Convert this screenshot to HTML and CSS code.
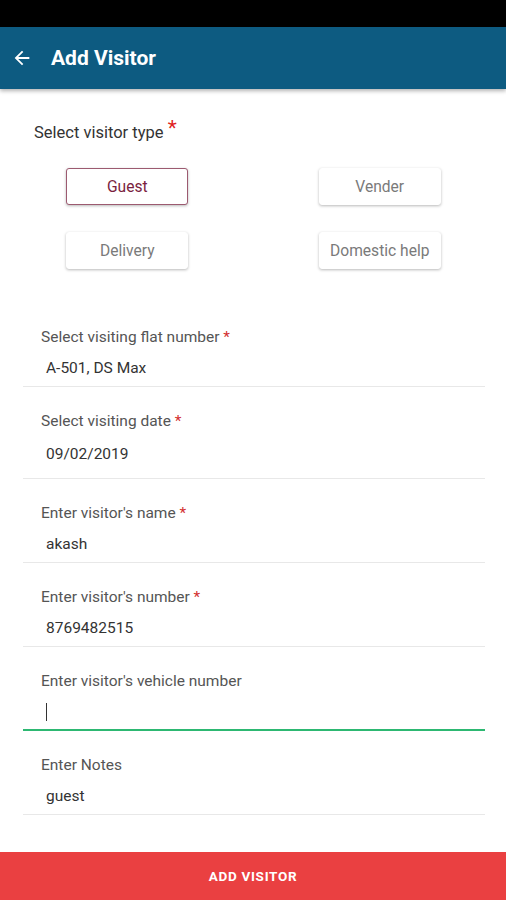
FILE: index.html
```html
<!DOCTYPE html>
<html>
<head>
<meta charset="utf-8">
<link rel="stylesheet" href="styles.css">
</head>
<body>
<div class="app">
  <div class="statusbar"></div>
  <header class="appbar">
    <svg class="back" width="22" height="22" viewBox="0 0 24 24"><path d="M20 11H7.83l5.59-5.59L12 4l-8 8 8 8 1.41-1.41L7.83 13H20v-2z" fill="#fff"/></svg>
    <h1 class="title">Add Visitor</h1>
  </header>
  <main class="content">
    <div class="type-label">Select visitor type <span class="req-big">*</span></div>
    <div class="type-grid">
      <div class="cell"><button class="chip chip-active">Guest</button></div>
      <div class="cell"><button class="chip">Vender</button></div>
      <div class="cell"><button class="chip">Delivery</button></div>
      <div class="cell"><button class="chip">Domestic help</button></div>
    </div>
    <div class="fields">
      <div class="field">
        <div class="label">Select visiting flat number <span class="req">*</span></div>
        <div class="value">A-501, DS Max</div>
      </div>
      <div class="field field-date">
        <div class="label">Select visiting date <span class="req">*</span></div>
        <div class="value">09/02/2019</div>
      </div>
      <div class="field">
        <div class="label">Enter visitor's name <span class="req">*</span></div>
        <div class="value">akash</div>
      </div>
      <div class="field">
        <div class="label">Enter visitor's number <span class="req">*</span></div>
        <div class="value">8769482515</div>
      </div>
      <div class="field field-focus">
        <div class="label">Enter visitor's vehicle number</div>
        <div class="value"><span class="cursor"></span></div>
      </div>
      <div class="field">
        <div class="label">Enter Notes</div>
        <div class="value">guest</div>
      </div>
    </div>
  </main>
  <footer class="submit">ADD VISITOR</footer>
</div>
</body>
</html>
```
FILE: styles.css
```css
* { box-sizing: border-box; }
html, body { margin: 0; padding: 0; }
body {
  font-family: Roboto, "Noto Sans", Arial, sans-serif;
  background: #fff;
}
.app {
  width: 506px;
  height: 900px;
  display: flex;
  flex-direction: column;
  overflow: hidden;
}
.statusbar {
  height: 27px;
  background: #000;
  flex: none;
}
.appbar {
  height: 62px;
  background: #0d5b81;
  display: flex;
  align-items: center;
  padding-left: 11px;
  box-shadow: 0 2px 4px rgba(0,0,0,0.3);
  position: relative;
  z-index: 1;
  flex: none;
}
.back { margin-right: 18px; }
.title {
  margin: 0;
  color: #fff;
  font-size: 21px;
  font-weight: 700;
}
.content {
  flex: 1;
  padding-top: 32px;
}
.type-label {
  font-size: 16.5px;
  color: #333;
  padding-left: 34px;
  line-height: 20px;
  height: 20px;
}
.req-big {
  color: #e0231f;
  font-size: 21px;
  position: relative;
  top: -3px;
}
.type-grid {
  display: grid;
  grid-template-columns: 1fr 1fr;
  row-gap: 27px;
  margin-top: 27px;
  padding-left: 1px;
}
.cell {
  display: flex;
  justify-content: center;
}
.chip {
  width: 122px;
  height: 37px;
  background: #fff;
  border: 1px solid #fff;
  border-radius: 3px;
  box-shadow: 0 1px 3px rgba(0,0,0,0.28);
  font-family: inherit;
  font-size: 15.6px;
  color: #7a7a7a;
  padding: 0;
}
.chip-active {
  border-color: #9c5a70;
  color: #7a1e40;
}
.fields {
  margin-top: 58px;
  padding: 0 21px 0 23px;
}
.field {
  padding-top: 24px;
  border-bottom: 1px solid #e8e8e8;
  padding-bottom: 8px;
}
.field:first-child { padding-top: 0; }
.label {
  font-size: 15.5px;
  color: #555;
  line-height: 20px;
  height: 20px;
  padding-left: 18px;
}
.req { color: #d32f2f; }
.value {
  margin-top: 11px;
  font-size: 15.5px;
  color: #333;
  line-height: 20px;
  height: 20px;
  padding-left: 23px;
  display: flex;
  align-items: center;
}
.field-date .value { margin-top: 13px; }
.field-date { padding-bottom: 14px; }
.field-focus {
  border-bottom: 2px solid #2db872;
  padding-bottom: 7px;
}
.cursor {
  display: inline-block;
  width: 1px;
  height: 18px;
  background: #333;
}
.submit {
  height: 48px;
  background: #ea4041;
  color: #fff;
  font-size: 13.5px;
  font-weight: 700;
  letter-spacing: 0.7px;
  display: flex;
  align-items: center;
  justify-content: center;
  flex: none;
}
```
